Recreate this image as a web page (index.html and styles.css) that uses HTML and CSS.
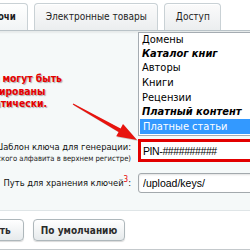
FILE: index.html
```html
<!DOCTYPE html>
<html lang="ru">
<head>
  <meta charset="UTF-8">
  <title>Ключи</title>
  <link rel="stylesheet" href="styles.css">
</head>
<body>

  <div class="page">
    <div class="tabs">
      <div class="tab tab-active">Ключи</div>
      <div class="tab">Электронные товары</div>
      <div class="tab">Доступ</div>
    </div>

    <div class="content">
      <div class="row">
        <div class="label">
          <div class="note">Ключи могут быть<br>сгенерированы<br>автоматически.</div>
        </div>
        <div class="value">
          <div class="listbox">
            <div class="opt opt-first">Домены</div>
            <div class="group">Каталог книг</div>
            <div class="opt">Авторы</div>
            <div class="opt">Книги</div>
            <div class="opt">Рецензии</div>
            <div class="group group-paid">Платный контент</div>
            <div class="opt opt-selected">Платные статьи</div>
          </div>
        </div>
      </div>

      <div class="row row-key">
        <div class="label label-key">
          Шаблон ключа для генерации:
          <div class="hint"><span>(# &mdash; цифры и буквы латинского алфавита в верхнем регистре)</span></div>
        </div>
        <div class="value">
          <input type="text" class="field field-marked" value="PIN-##########">
        </div>
      </div>

      <div class="row row-path">
        <div class="label label-path">Путь для хранения ключей<sup class="req">3</sup>:</div>
        <div class="value">
          <input type="text" class="field" value="/upload/keys/">
        </div>
      </div>
    </div>

    <div class="footer">
      <button class="btn btn-apply">Применить</button>
      <button class="btn btn-default">По умолчанию</button>
    </div>
  </div>

  <!-- стрелка-пометка поверх формы -->
  <svg class="arrow" width="250" height="250" viewBox="0 0 250 250">
    <polygon class="arrow-shadow" points="74.25,104.6 121.6,129.5 124,125.1 138,141 117.2,137.3 119.6,132.9 73.75,105.4"/>
    <polygon class="arrow-body" points="73.25,103.6 120.6,128.5 123,124.1 137,140 116.2,136.3 118.6,131.9 72.75,104.4"/>
  </svg>

</body>
</html>
```

FILE: styles.css
```css
body {
  margin: 0;
  font-family: 'DejaVu Sans Condensed', 'Liberation Sans', sans-serif;
  font-size: 10px;
  color: #000;
  background: #fff;
  overflow: hidden;
  width: 250px;
  height: 250px;
  position: relative;
}

.page {
  width: 420px;
  margin-left: -60px;
}

/* вкладки */
.tabs {
  display: flex;
  align-items: flex-end;
  gap: 6px;
  height: 30px;
  padding-left: 30px;
  border-bottom: 1px solid #b9c3c8;
  background: #fff;
}

.tab {
  height: 26px;
  line-height: 26px;
  padding: 0 10px 0 11px;
  font-size: 10px;
  color: #1e1e1e;
  border: 1px solid #c9d1d5;
  border-bottom: none;
  border-radius: 4px 4px 0 0;
  background: linear-gradient(#fbfbfb, #ebeeef);
  box-shadow: inset 0 1px 0 #fff;
}

.tab-active {
  font-weight: bold;
  font-size: 9.6px;
  padding-right: 11px;
  background: linear-gradient(#ffffff, #f1f4f5);
}

/* форма */
.content {
  background: #f5f9f9;
  padding: 1px 0 17px;
  box-shadow: inset 0 2px 2px rgba(0,0,0,0.06);
}

.row {
  display: flex;
}

.label {
  flex: none;
  width: 191px;
  text-align: right;
  font-size: 9.3px;
  line-height: 13px;
  color: #111;
  white-space: nowrap;
}

.value {
  margin-left: 7px;
  flex: 1;
}

.note {
  text-align: left;
  padding: 40px 0 0 23px;
  color: #e60000;
  font-weight: bold;
  font-size: 10.3px;
  line-height: 12.5px;
  text-shadow: 1px 1px 1px #aaa;
}

.listbox {
  background: #fff;
  border: 1px solid #a5acb2;
  padding: 0 0 1px;
  font-size: 11px;
  color: #000;
}

.opt,
.group {
  height: 15px;
  line-height: 15px;
  padding-left: 3px;
  white-space: nowrap;
}

.opt-first {
  height: 14px;
  line-height: 14px;
}

.group {
  height: 13px;
  line-height: 13px;
  font-weight: bold;
  font-style: italic;
}

.group-paid {
  height: 14px;
  line-height: 14px;
}

.opt-selected {
  background: #3399ff;
  color: #fff;
  margin-left: 1px;
}

.row-key {
  margin-top: 3px;
}

.label-key {
  padding-top: 1px;
}

/* длинная подсказка уходит влево, правый край прижат к полю */
.hint {
  display: flex;
  justify-content: flex-end;
  font-size: 7.6px;
  line-height: 11px;
  color: #222;
}

.row-path {
  margin-top: 9px;
}

.label-path {
  padding-top: 3px;
}

.req {
  color: #e60000;
  font-size: 8px;
  line-height: 0;
}

.field {
  display: block;
  box-sizing: border-box;
  width: 200px;
  height: 20px;
  margin: 0;
  padding: 0 4px;
  font-family: 'Liberation Sans', sans-serif;
  font-size: 10.5px;
  color: #000;
  background: #fff;
  border: 1px solid #a3a9ad;
  border-radius: 3px;
  box-shadow: inset 0 1px 2px rgba(0,0,0,0.12);
}

.field-marked {
  height: 23px;
  border: 3px solid #e20000;
  border-radius: 0;
  padding: 0 2px;
  letter-spacing: -0.4px;
  box-shadow: none;
}

/* кнопки */
.footer {
  display: flex;
  gap: 9px;
  padding: 8px 0;
  border-top: 1px solid #dfe5e7;
  border-bottom: 2px solid #c4c9cc;
  background: #fff;
}

.btn {
  height: 22px;
  padding: 0;
  font-family: 'DejaVu Sans Condensed', 'Liberation Sans', sans-serif;
  font-size: 10px;
  font-weight: bold;
  color: #2b2b2b;
  border: 1px solid #aeb7bb;
  border-radius: 4px;
  background: linear-gradient(#ffffff, #e6eaec);
  box-shadow: 0 1px 1px rgba(0,0,0,0.15);
}

.btn-apply {
  width: 84px;
}

.btn-default {
  width: 92px;
}

.arrow {
  position: absolute;
  left: 0;
  top: 0;
  pointer-events: none;
}

.arrow-body {
  fill: #e8140e;
}

.arrow-shadow {
  fill: rgba(0,0,0,0.18);
}
```
